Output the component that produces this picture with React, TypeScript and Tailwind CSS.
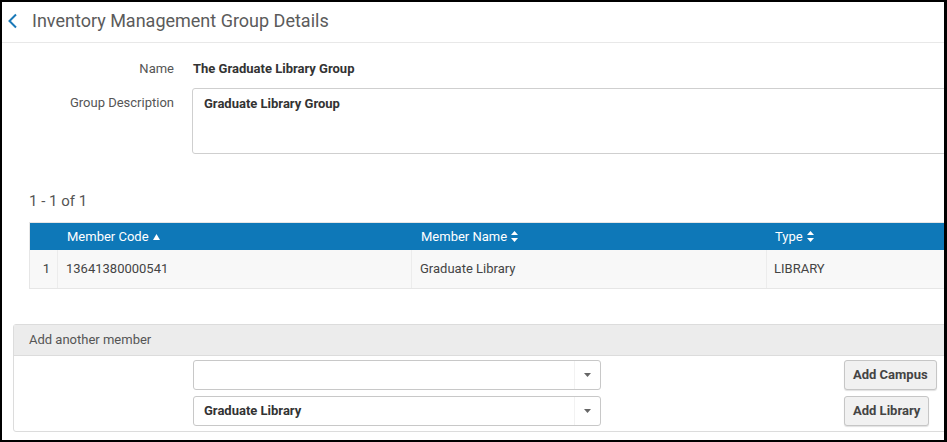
const font = { fontFamily: "Roboto, 'Liberation Sans', sans-serif" };

function SortBoth() {
  return (
    <svg width="7" height="11" viewBox="0 0 7 11" className="ml-1 inline-block" aria-hidden="true">
      <path d="M3.5 0 L7 4 H0 Z" fill="currentColor" />
      <path d="M3.5 11 L7 7 H0 Z" fill="currentColor" />
    </svg>
  );
}

function SortUp() {
  return (
    <svg width="7" height="6" viewBox="0 0 7 6" className="ml-1 inline-block" aria-hidden="true">
      <path d="M3.5 0 L7 6 H0 Z" fill="currentColor" />
    </svg>
  );
}

function Select({ value }: { value?: string }) {
  return (
    <div className="flex h-[30px] w-[408px] items-center rounded-[3px] border border-[#c8c8c8] bg-white">
      <span className="flex-1 truncate pl-[10px] text-[13px] font-bold text-[#333]">{value}</span>
      <span className="flex h-full w-[26px] items-center justify-center border-l border-[#f2f2f2]">
        <svg width="7" height="4" viewBox="0 0 7 4" aria-hidden="true">
          <path d="M0 0 H7 L3.5 4 Z" fill="#666" />
        </svg>
      </span>
    </div>
  );
}

function Button({ children }: { children: React.ReactNode }) {
  return (
    <button className="h-[30px] rounded-[3px] border border-[#c6c6c6] bg-[#f1f1f1] px-[8px] text-[13px] font-bold text-[#444] shadow-[0_1px_1px_rgba(0,0,0,0.12)]">
      {children}
    </button>
  );
}

export default function App() {
  return (
    <div
      style={font}
      className="h-[442px] w-[947px] overflow-hidden border-b-2 border-l-2 border-r-[3px] border-t-2 border-black bg-white"
    >
      <div className="w-[1000px]">
        {/* Titre */}
        <div className="flex h-[41px] items-center border-b border-[#e8e8e8]">
          <svg width="11" height="16" viewBox="0 0 11 16" className="ml-[5px] -mt-[3px]" aria-hidden="true">
            <path d="M9 1.5 L2.5 8 L9 14.5" fill="none" stroke="#1a79b8" strokeWidth="2" />
          </svg>
          <h1 className="ml-[14px] -mt-[3px] text-[18px] text-[#5b5b5b]">Inventory Management Group Details</h1>
        </div>

        {/* Nom et description */}
        <div className="mt-[16px] flex items-center">
          <span className="w-[172px] text-right text-[13px] text-[#555]">Name</span>
          <span className="ml-[19px] text-[13px] font-bold text-[#333]">The Graduate Library Group</span>
        </div>
        <div className="mt-[9px] flex items-start">
          <span className="mt-[5px] w-[172px] text-right text-[13px] text-[#555]">Group Description</span>
          <div className="ml-[18px] h-[66px] flex-1 rounded-[3px] border border-[#cfcfcf] px-[11px] pt-[5px] text-[13px] font-bold text-[#333]">
            Graduate Library Group
          </div>
        </div>

        {/* Tableau des membres */}
        <div className="ml-[27px] mt-[36px] text-[15px] text-[#555]">1 - 1 of 1</div>
        <div className="ml-[27px] mt-[10px] border border-[#e6e6e6]">
          <div className="flex h-[27px] items-center bg-[#0e78b8] text-[13px] text-white">
            <span className="w-[28px]" />
            <span className="flex w-[354px] items-center pl-[9px]">
              Member Code
              <SortUp />
            </span>
            <span className="flex w-[355px] items-center pl-[9px]">
              Member Name
              <SortBoth />
            </span>
            <span className="flex items-center pl-[8px]">
              Type
              <SortBoth />
            </span>
          </div>
          <div className="flex h-[38px] items-center bg-[#f8f8f8] text-[13px] text-[#444]">
            <span className="flex h-full w-[28px] items-center justify-end border-r border-[#ececec] pr-[7px]">1</span>
            <span className="flex h-full w-[354px] items-center border-r border-[#ececec] pl-[8px]">13641380000541</span>
            <span className="flex h-full w-[355px] items-center border-r border-[#ececec] pl-[8px]">Graduate Library</span>
            <span className="flex h-full items-center pl-[7px]">LIBRARY</span>
          </div>
        </div>

        {/* Ajouter un membre */}
        <div className="ml-[11px] mt-[35px] rounded-[3px] border border-[#dcdcdc]">
          <div className="flex h-[31px] items-center border-b border-[#dcdcdc] bg-[#ececec] pl-[15px] text-[13px] text-[#555]">
            Add another member
          </div>
          <div className="flex flex-col gap-[6px] pb-[5px] pt-[4px]">
            <div className="flex items-center">
              <div className="ml-[179px]">
                <Select />
              </div>
              <div className="ml-[243px]">
                <Button>Add Campus</Button>
              </div>
            </div>
            <div className="flex items-center">
              <div className="ml-[179px]">
                <Select value="Graduate Library" />
              </div>
              <div className="ml-[243px]">
                <Button>Add Library</Button>
              </div>
            </div>
          </div>
        </div>
      </div>
    </div>
  );
}
